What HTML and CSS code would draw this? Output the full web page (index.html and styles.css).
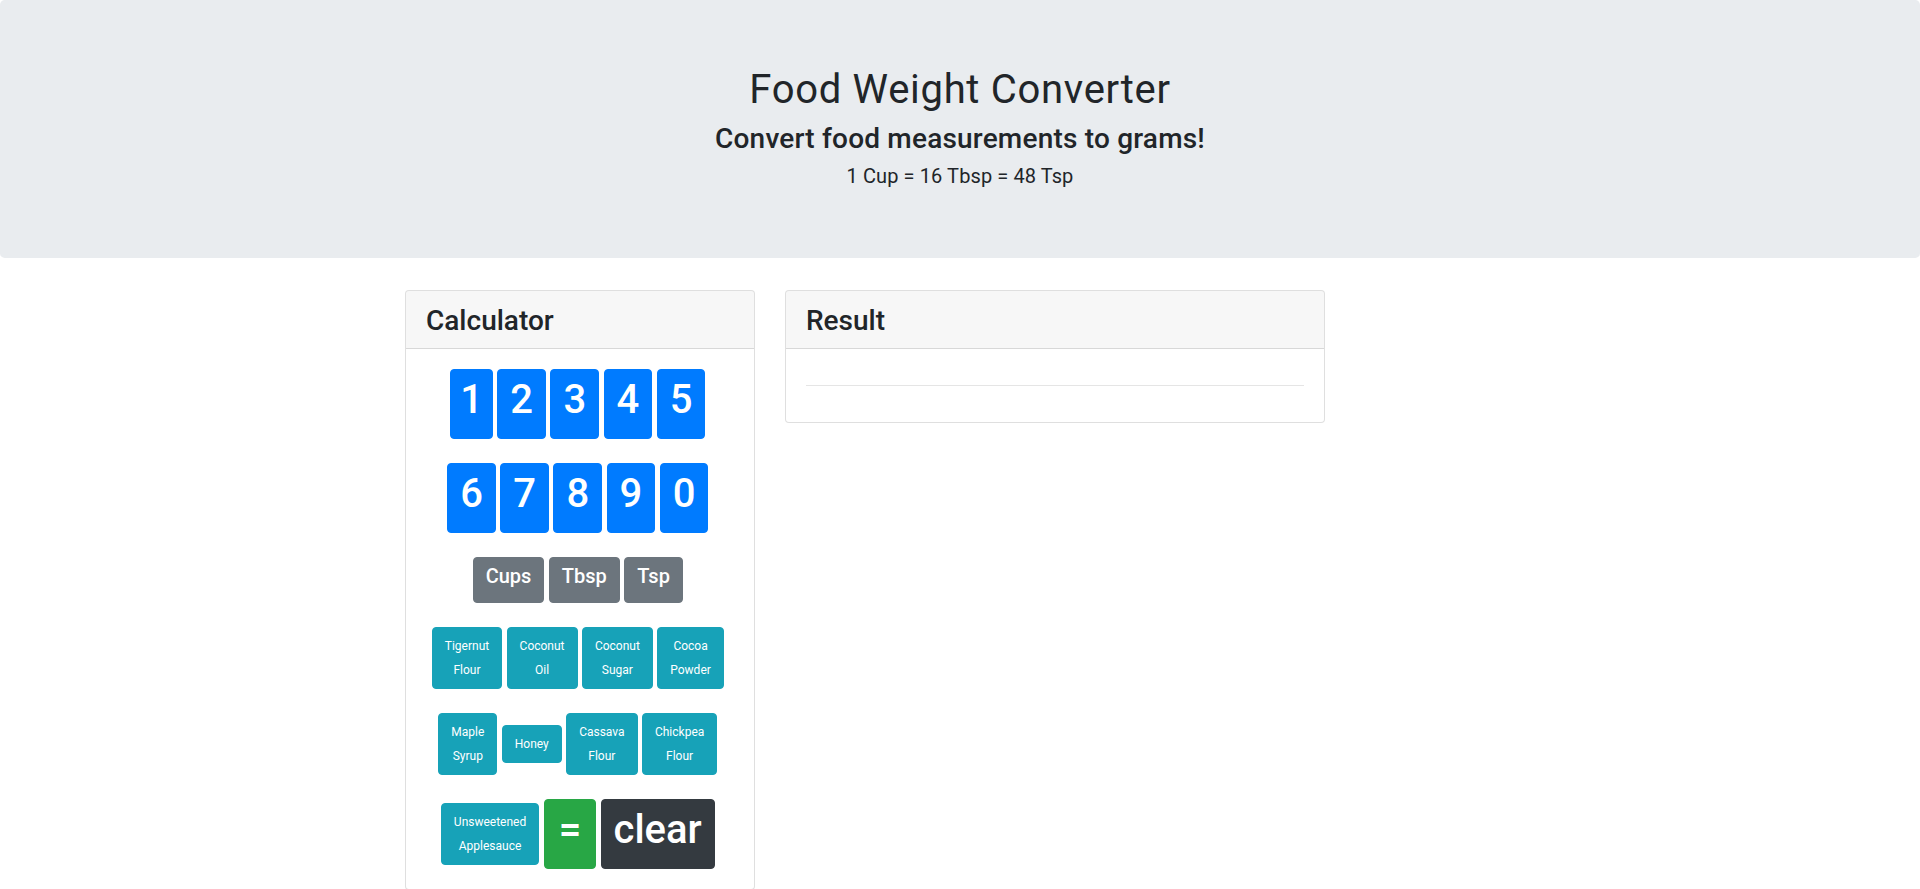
FILE: index.html
```html
<!DOCTYPE html>
<html lang="en">
<head>
<meta charset="utf-8">
<title>Food Weight Converter</title>
<link rel="stylesheet" href="styles.css">
</head>
<body>
<header class="jumbotron">
  <h1 class="title">Food Weight Converter</h1>
  <h3 class="subtitle">Convert food measurements to grams!</h3>
  <h5 class="ratio">1 Cup = 16 Tbsp = 48 Tsp</h5>
</header>
<main class="container">
  <div class="row">
    <div class="col-4">
      <section class="card">
        <div class="card-header"><h3 class="card-title">Calculator</h3></div>
        <div class="card-body">
          <div class="keys">
            <button class="btn btn-primary btn-big btn-narrow"><span>1</span></button>
            <button class="btn btn-primary btn-big"><span>2</span></button>
            <button class="btn btn-primary btn-big"><span>3</span></button>
            <button class="btn btn-primary btn-big"><span>4</span></button>
            <button class="btn btn-primary btn-big"><span>5</span></button>
          </div>
          <div class="keys">
            <button class="btn btn-primary btn-big"><span>6</span></button>
            <button class="btn btn-primary btn-big"><span>7</span></button>
            <button class="btn btn-primary btn-big"><span>8</span></button>
            <button class="btn btn-primary btn-big"><span>9</span></button>
            <button class="btn btn-primary btn-big"><span>0</span></button>
          </div>
          <div class="keys">
            <button class="btn btn-secondary btn-mid"><span>Cups</span></button>
            <button class="btn btn-secondary btn-mid"><span>Tbsp</span></button>
            <button class="btn btn-secondary btn-mid"><span>Tsp</span></button>
          </div>
          <div class="keys">
            <button class="btn btn-info btn-small"><span>Tigernut<br>Flour</span></button>
            <button class="btn btn-info btn-small"><span>Coconut<br>Oil</span></button>
            <button class="btn btn-info btn-small"><span>Coconut<br>Sugar</span></button>
            <button class="btn btn-info btn-small"><span>Cocoa<br>Powder</span></button>
          </div>
          <div class="keys">
            <button class="btn btn-info btn-small"><span>Maple<br>Syrup</span></button>
            <button class="btn btn-info btn-small"><span>Honey</span></button>
            <button class="btn btn-info btn-small"><span>Cassava<br>Flour</span></button>
            <button class="btn btn-info btn-small"><span>Chickpea<br>Flour</span></button>
          </div>
          <div class="keys">
            <button class="btn btn-info btn-small"><span>Unsweetened<br>Applesauce</span></button>
            <button class="btn btn-success btn-big btn-wide"><span>=</span></button>
            <button class="btn btn-dark btn-big"><span>clear</span></button>
          </div>
        </div>
      </section>
    </div>
    <div class="col-6">
      <section class="card">
        <div class="card-header"><h3 class="card-title">Result</h3></div>
        <div class="card-body">
          <hr class="divider">
        </div>
      </section>
    </div>
  </div>
</main>
</body>
</html>
```

FILE: styles.css
```css
* {
  box-sizing: border-box;
}

html, body {
  margin: 0;
  padding: 0;
}

body {
  font-family: Roboto, "Liberation Sans", sans-serif;
  font-size: 16px;
  line-height: 1.5;
  color: #212529;
  background: #fff;
}

h1, h3, h5 {
  margin: 0 0 8px 0;
  font-weight: 500;
  line-height: 1.2;
}

.jumbotron {
  background: #e9ecef;
  padding: 66px 32px 62px;
  margin-bottom: 32px;
  border-radius: 4.8px;
  text-align: center;
}

.title {
  font-size: 40px;
  font-weight: 400;
  letter-spacing: 0.7px;
}

.subtitle {
  font-size: 28px;
  letter-spacing: 0.2px;
}

.ratio {
  font-size: 20px;
  font-weight: 400;
  letter-spacing: 0.1px;
}

.container {
  max-width: 1140px;
  margin: 0 auto;
  padding: 0 15px;
}

.row {
  display: flex;
  align-items: flex-start;
  margin: 0 -15px;
}

.col-4 {
  flex: 0 0 33.3333%;
  max-width: 33.3333%;
  padding: 0 15px;
}

.col-6 {
  flex: 0 0 50%;
  max-width: 50%;
  padding: 0 15px;
}

.card {
  border: 1px solid rgba(0, 0, 0, 0.125);
  border-radius: 4px;
  background: #fff;
  overflow: hidden;
}

.card-header {
  padding: 13px 20px 11px;
  background: rgba(0, 0, 0, 0.03);
  border-bottom: 1px solid rgba(0, 0, 0, 0.125);
}

.card-title {
  margin: 0;
  font-size: 28px;
  font-weight: 500;
}

.card-body {
  padding: 20px;
}

.keys {
  display: flex;
  justify-content: center;
  align-items: center;
  gap: 4.4px;
  padding-right: 4.4px;
  margin-bottom: 24px;
}

.keys:last-child {
  margin-bottom: 0;
}

.btn {
  font-family: inherit;
  font-size: 16px;
  line-height: 24px;
  color: #fff;
  border: 1px solid transparent;
  border-radius: 4px;
  padding: 6px 12px;
  margin: 0;
  text-align: center;
  cursor: pointer;
}

.btn span {
  display: block;
}

.btn-big span {
  font-size: 40px;
  line-height: 48px;
  margin-bottom: 8px;
  font-weight: 500;
}

.btn-narrow {
  padding-left: 9px;
  padding-right: 9px;
}

.btn-wide {
  padding-left: 14px;
  padding-right: 14px;
}

.btn-mid span {
  font-size: 20px;
  line-height: 24px;
  margin-bottom: 8px;
  font-weight: 500;
}

.btn-small span {
  font-size: 12px;
  line-height: 24px;
}

.btn-primary {
  background: #007bff;
  border-color: #007bff;
}

.btn-secondary {
  background: #6c757d;
  border-color: #6c757d;
}

.btn-info {
  background: #17a2b8;
  border-color: #17a2b8;
}

.btn-success {
  background: #28a745;
  border-color: #28a745;
}

.btn-dark {
  background: #343a40;
  border-color: #343a40;
}

.divider {
  border: 0;
  border-top: 1px solid rgba(0, 0, 0, 0.1);
  margin: 16px 0;
}
```
